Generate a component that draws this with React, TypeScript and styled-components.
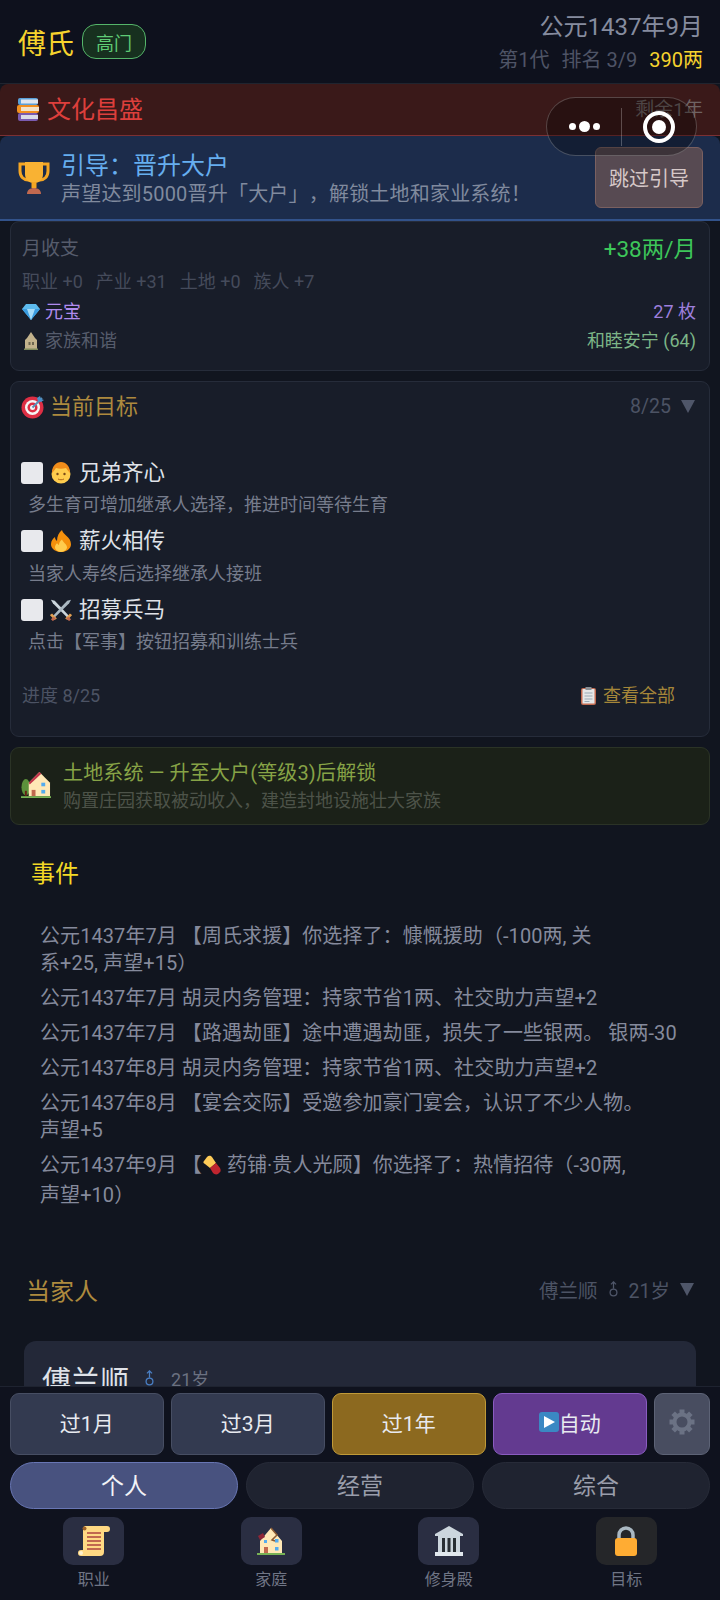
import React from 'react';
import styled, { createGlobalStyle } from 'styled-components';

const GlobalStyle = createGlobalStyle`
  html, body {
    margin: 0;
    padding: 0;
    background: #10141f;
  }
  * {
    box-sizing: border-box;
    text-spacing-trim: space-all;
  }
`;

const Page = styled.div`
  position: relative;
  width: 720px;
  height: 1600px;
  display: flex;
  flex-direction: column;
  overflow: hidden;
  background: #11151f;
  font-family: Roboto, "Noto Sans CJK SC", sans-serif;
`;

const Scroll = styled.div`
  flex: 1;
  min-height: 0;
  overflow: hidden;
`;

/* top bar */
const Header = styled.div`
  height: 84px;
  padding: 0 17px 0 18px;
  display: flex;
  align-items: center;
  justify-content: space-between;
  background: #0e111d;
  border-bottom: 1px solid #20242f;
`;

const FamilyBlock = styled.div`
  display: flex;
  align-items: center;
  gap: 8px;
`;

const FamilyName = styled.div`
  font-size: 28px;
  color: #f6d32d;
`;

const RankBadge = styled.div`
  width: 64px;
  height: 35px;
  border: 1px solid #55b56a;
  border-radius: 14px;
  display: flex;
  align-items: center;
  justify-content: center;
  background: #17301f;
  color: #5fcb75;
  font-size: 18px;
`;

const HeaderRight = styled.div`
  display: flex;
  flex-direction: column;
  align-items: flex-end;
  gap: 2px;
`;

const DateText = styled.div`
  font-size: 24px;
  line-height: 34px;
  color: #868c9f;
`;

const SubLine = styled.div`
  display: flex;
  gap: 12px;
  font-size: 20px;
  line-height: 28px;
  color: #4e5466;
`;

const Money = styled.span`
  color: #f6d32d;
`;

const CultureBanner = styled.div`
  height: 52px;
  padding: 0 17px 4px 17px;
  display: flex;
  align-items: center;
  justify-content: space-between;
  background: #3a1919;
  border-bottom: 1px solid #7c3033;
  border-radius: 8px 8px 0 0;
`;

const CultureTitle = styled.div`
  display: flex;
  align-items: center;
  gap: 8px;
  font-size: 24px;
  color: #dd3f3c;
  svg {
    margin-top: 3px;
  }
`;

const CultureTime = styled.div`
  font-size: 19px;
  color: #6f6363;
`;

const GuideBanner = styled.div`
  height: 85px;
  padding: 0 17px;
  display: flex;
  align-items: center;
  gap: 10px;
  background: #1c2c4b;
  border-bottom: 2px solid #32528a;
  border-radius: 8px 8px 0 0;
`;

const GuideText = styled.div`
  flex: 1;
  align-self: flex-start;
  padding-top: 14px;
`;

const GuideTitle = styled.div`
  font-size: 24px;
  line-height: 32px;
  color: #66aeef;
`;

const GuideDesc = styled.div`
  font-size: 20px;
  line-height: 24px;
  letter-spacing: 0.2px;
  color: #808a9e;
`;

const SkipButton = styled.div`
  width: 108px;
  height: 61px;
  display: flex;
  align-items: center;
  justify-content: center;
  background: #574a52;
  border: 1px solid #7a6060;
  border-radius: 6px;
  color: #d6c8c8;
  font-size: 20px;
`;

const Capsule = styled.div`
  position: absolute;
  top: 97px;
  left: 546px;
  width: 151px;
  height: 59px;
  display: flex;
  align-items: center;
  border: 1px solid rgba(255, 255, 255, 0.22);
  border-radius: 30px;
  background: rgba(0, 0, 0, 0.3);
`;

const CapsulePart = styled.div`
  flex: 1;
  height: 38px;
  display: flex;
  align-items: center;
  justify-content: center;
  gap: 3px;
  & + & {
    border-left: 1px solid rgba(255, 255, 255, 0.25);
  }
`;

const Dot = styled.span<{ $big?: boolean }>`
  width: ${p => (p.$big ? 11 : 7)}px;
  height: ${p => (p.$big ? 11 : 7)}px;
  border-radius: 50%;
  background: #fff;
`;

const RecordRing = styled.div`
  width: 32px;
  height: 32px;
  border: 4px solid #fff;
  border-radius: 50%;
  display: flex;
  align-items: center;
  justify-content: center;
  &::after {
    content: '';
    width: 14px;
    height: 14px;
    border-radius: 50%;
    background: #fff;
  }
`;

/* cards */
const Card = styled.div<{ $height: number }>`
  height: ${p => p.$height}px;
  margin: 0 10px 10px;
  background: #181d29;
  border: 1px solid #262c3a;
  border-radius: 9px;
`;

const IncomeBody = styled.div`
  padding: 9px 13px 0 11px;
`;

const SpreadRow = styled.div<{ $height: number }>`
  height: ${p => p.$height}px;
  display: flex;
  align-items: center;
  justify-content: space-between;
`;

const MutedLabel = styled.div`
  margin-bottom: 2px;
  font-size: 19px;
  color: #565c6c;
`;

const IncomeValue = styled.div`
  font-size: 22.500px;
  color: #3dc65a;
`;

const SourceRow = styled.div`
  display: flex;
  gap: 13px;
  font-size: 18px;
  color: #454b5b;
`;

const ResourceName = styled.div<{ $color: string }>`
  display: flex;
  align-items: center;
  gap: 5px;
  font-size: 18px;
  color: ${p => p.$color};
  svg {
    margin-top: 4px;
  }
`;

const ResourceValue = styled.div<{ $color: string }>`
  font-size: 18px;
  color: ${p => p.$color};
`;

const GoalHeader = styled.div`
  height: 44px;
  padding: 0 14px 0 10px;
  display: flex;
  align-items: center;
  justify-content: space-between;
`;

const GoalHeading = styled.div`
  display: flex;
  align-items: center;
  gap: 5px;
  font-size: 22px;
  color: #ad8a3e;
  svg {
    margin-top: 6px;
  }
`;

const Fold = styled.div`
  display: flex;
  align-items: center;
  gap: 10px;
  font-size: 19.5px;
  color: #4c5364;
`;

const GoalFold = styled(Fold)`
  margin-top: 5px;
`;

const GoalList = styled.div`
  padding: 27px 10px 0;
`;

const GoalItem = styled.div`
  height: 68.5px;
`;

const GoalTitle = styled.div`
  display: flex;
  align-items: center;
  gap: 7px;
  height: 34px;
  font-size: 21.5px;
  color: #dfe2e8;
  & > * {
    margin-top: 5px;
  }
`;

const CheckBox = styled.span`
  width: 22px;
  height: 22px;
  border-radius: 3px;
  background: #e8e9ed;
`;

const GoalDesc = styled.div`
  margin-top: 3px;
  padding-left: 7px;
  line-height: 30px;
  font-size: 18px;
  color: #767c8c;
`;

const GoalFooter = styled.div`
  margin-top: 22px;
  padding: 0 34px 0 11px;
  display: flex;
  align-items: center;
  justify-content: space-between;
  font-size: 18px;
  color: #4c5364;
`;

const ViewAll = styled.div`
  display: flex;
  align-items: center;
  gap: 6px;
  color: #a58639;
  svg {
    margin-top: 5px;
  }
`;

const LandCard = styled(Card)`
  padding: 0 10px;
  display: flex;
  align-items: center;
  gap: 12px;
  background: #1b2118;
  border-color: #2b3326;
  svg {
    margin-bottom: 3px;
  }
`;

const LandTitle = styled.div`
  font-size: 20px;
  line-height: 28px;
  letter-spacing: 0.15px;
  color: #87a346;
`;

const LandDesc = styled.div`
  font-size: 18px;
  line-height: 27px;
  color: #4d5349;
`;

/* events */
const EventsTitle = styled.div`
  padding: 22px 0 0 31px;
  font-size: 24px;
  line-height: 34px;
  color: #f3d925;
`;

const EventList = styled.div`
  padding: 32px 30px 0 40px;
  display: flex;
  flex-direction: column;
  gap: 8px;
`;

const EventLine = styled.div`
  font-size: 20px;
  line-height: 27px;
  letter-spacing: 0.07px;
  color: #858a9c;
`;

const InlineIcon = styled.span`
  display: inline-block;
  vertical-align: -3px;
  margin-right: 5px;
`;

const ChiefHeader = styled.div`
  margin-top: 63px;
  padding: 0 26px 0 26px;
  display: flex;
  align-items: center;
  justify-content: space-between;
`;

const ChiefTitle = styled.div`
  font-size: 24px;
  color: #ad8a3e;
`;

const ChiefCard = styled.div`
  margin: 34px 24px 0;
  height: 120px;
  padding: 21px 18px;
  display: flex;
  align-items: flex-start;
  gap: 12px;
  background: #232838;
  border-radius: 12px;
`;

const ChiefName = styled.div`
  font-size: 29px;
  line-height: 40px;
  color: #dfe2e8;
`;

const ChiefAge = styled.div`
  display: flex;
  align-items: center;
  gap: 16px;
  margin-top: 3px;
  margin-left: 3px;
  font-size: 18px;
  color: #6b7181;
`;

/* bottom bar */
const Footer = styled.div`
  position: relative;
  height: 214px;
  padding: 6px 10px 0;
  background: #0f121e;
  border-top: 1px solid #1e2330;
`;

const ActionRow = styled.div`
  display: grid;
  grid-template-columns: 1fr 1fr 1fr 1fr 56px;
  gap: 7.5px;
  height: 62px;
`;

const ActionButton = styled.div<{ $bg: string; $line: string }>`
  display: flex;
  align-items: center;
  justify-content: center;
  padding-bottom: 4px;
  background: ${p => p.$bg};
  border: 1px solid ${p => p.$line};
  border-radius: 9px;
  color: #e8eaf0;
  font-size: 21px;
`;

const TabRow = styled.div`
  display: grid;
  grid-template-columns: 1fr 1fr 1fr;
  gap: 8px;
  height: 47px;
  margin-top: 7px;
`;

const Tab = styled.div<{ $active?: boolean }>`
  display: flex;
  align-items: center;
  justify-content: center;
  padding-bottom: 4px;
  border-radius: 24px;
  background: ${p => (p.$active ? '#48527f' : '#1f2330')};
  border: 1px solid ${p => (p.$active ? '#6876b4' : '#272b38')};
  color: ${p => (p.$active ? '#f2f3f7' : '#9a9eab')};
  font-size: 23px;
`;

const NavRow = styled.div`
  display: grid;
  grid-template-columns: repeat(4, 1fr);
  margin: 8px -5px 0;
`;

const NavItem = styled.div`
  display: flex;
  flex-direction: column;
  align-items: center;
`;

const NavTile = styled.div<{ $locked?: boolean }>`
  width: 61px;
  height: 48px;
  display: flex;
  align-items: center;
  justify-content: center;
  border-radius: 10px;
  background: ${p => (p.$locked ? '#252629' : '#2a2e42')};
`;

const NavLabel = styled.div`
  margin-top: 3px;
  font-size: 16px;
  line-height: 24px;
  color: #6f7585;
`;

/* emoji drawings */
const Books = () => (
  <svg width="22" height="23" viewBox="0 0 22 23">
    <rect x="1" y="0" width="20" height="7" rx="2" fill="#5aa0d8" />
    <rect x="4" y="1.500" width="17" height="4" fill="#dfe6ee" />
    <rect x="0" y="7" width="22" height="8" rx="2" fill="#f19020" />
    <rect x="4" y="9" width="18" height="4" fill="#f3e3c8" />
    <rect x="1" y="15" width="20" height="8" rx="2" fill="#7a5bb0" />
    <rect x="4" y="17" width="17" height="4" fill="#d9dbe8" />
  </svg>
);

const Trophy = () => (
  <svg width="34" height="34" viewBox="0 0 34 34">
    <path d="M3 3h28v7c0 6-4 9-8 9H11C7 19 3 16 3 10z" fill="none" stroke="#f5a623" strokeWidth="3" />
    <path d="M8 1h18v12c0 6-4 9-9 9s-9-3-9-9z" fill="#f9b233" />
    <rect x="14.500" y="21" width="5" height="6" fill="#f5a623" />
    <path d="M10 33c0-4 3-6 7-6s7 2 7 6z" fill="#c1694f" />
  </svg>
);

const Diamond = () => (
  <svg width="18" height="16" viewBox="0 0 18 16">
    <path d="M4 0h10l4 5-9 11L0 5z" fill="#5dbbee" />
    <path d="M0 5h18L9 16z" fill="#3a9ce0" />
    <path d="M5 5h8l-4 11z" fill="#a6dcf8" />
  </svg>
);

const Shack = () => (
  <svg width="18" height="18" viewBox="0 0 18 18">
    <path d="M9 0l4 6 2 2v10H3V8l2-2z" fill="#c2b28c" />
    <rect x="6.500" y="10" width="2" height="3" fill="#6d6650" />
    <rect x="10" y="10" width="2" height="3" fill="#6d6650" />
    <rect x="2" y="16.500" width="14" height="1.500" fill="#7f8a5c" />
  </svg>
);

const Target = () => (
  <svg width="24" height="24" viewBox="0 0 24 24">
    <circle cx="11.500" cy="12.500" r="11" fill="#dd2e44" />
    <circle cx="11.500" cy="12.500" r="7.500" fill="#f5f5f5" />
    <circle cx="11.500" cy="12.500" r="5" fill="#dd2e44" />
    <circle cx="11.500" cy="12.500" r="2.500" fill="#f5f5f5" />
    <path d="M11.500 12.500L21 3" stroke="#5a8fb8" strokeWidth="2" />
    <path d="M19 1l1 3 3 1-3 2-3-1-1-3z" fill="#4a90c8" />
  </svg>
);

const Boy = () => (
  <svg width="22" height="22" viewBox="0 0 22 22">
    <circle cx="11" cy="12" r="9.500" fill="#ffcc4d" />
    <path d="M2 11C2 4 6 0 11 0s9 4 9 11c-2-2-3-4-4-5-3 1-7 1-10 0-1 1-2 3-4 5z" fill="#f08c1a" />
    <circle cx="7.500" cy="12" r="1.200" fill="#7a4a18" />
    <circle cx="14.500" cy="12" r="1.200" fill="#7a4a18" />
    <path d="M8 17c2 1 4 1 6 0" stroke="#b0661a" fill="none" />
  </svg>
);

const Fire = () => (
  <svg width="22" height="22" viewBox="0 0 22 28" preserveAspectRatio="none">
    <path d="M12 0c1 6 9 9 9 18 0 6-5 10-10 10S1 24 1 18c0-4 2-7 4-9 0 3 1 4 2 5 0-6 2-11 5-14z" fill="#f4900c" />
    <path d="M12 12c1 4 5 6 5 10 0 3-3 6-6 6s-6-3-6-6c0-2 1-4 2-5 1 1 1 2 2 2 0-3 1-5 3-7z" fill="#ffcc4d" />
  </svg>
);

const Swords = () => (
  <svg width="22" height="22" viewBox="0 0 23 26" preserveAspectRatio="none">
    <path d="M1 1l4 1 15 18-2 2L3 5z" fill="#ccd6dd" />
    <path d="M22 1l-4 1L3 20l2 2L20 5z" fill="#aab8c2" />
    <path d="M1 18l5 6M22 18l-5 6" stroke="#e3a052" strokeWidth="3" />
    <path d="M2 25l3-3M21 25l-3-3" stroke="#c1694f" strokeWidth="3" />
  </svg>
);

const Clipboard = () => (
  <svg width="17" height="18" viewBox="0 0 17 18">
    <rect x="1" y="1" width="15" height="17" rx="2" fill="#c1694f" />
    <rect x="2.500" y="2" width="12" height="14.500" fill="#e6e7e8" />
    <rect x="5.500" y="0" width="6" height="3" fill="#8a8f94" />
    <path d="M4.500 6h8M4.500 9h8M4.500 12h8M4.500 14.500h5" stroke="#99aab5" />
  </svg>
);

const Villa = () => (
  <svg width="30" height="27" viewBox="0 0 31 30" preserveAspectRatio="none">
    <ellipse cx="5" cy="18" rx="4.500" ry="9" fill="#5c913b" />
    <rect x="4" y="22" width="2" height="6" fill="#662113" />
    <path d="M8 13l11-12 11 12v15H8z" fill="#ffe8b6" />
    <path d="M8 13l11-12 2 2L9 15z" fill="#c0344a" />
    <rect x="11" y="21" width="4" height="7" fill="#c1694f" />
    <rect x="21" y="13" width="4" height="4" fill="#55acee" />
    <rect x="21" y="21" width="4" height="4" fill="#55acee" />
    <rect x="0" y="28" width="31" height="2" fill="#77b255" />
  </svg>
);

const Pill = () => (
  <svg width="20" height="20" viewBox="0 0 20 20">
    <path d="M2 6l3-4c2-2 4-1 5 0l4 6-6 5-5-4C1 8 1 7 2 6z" fill="#fdcb58" />
    <path d="M8 13l6-5 4 5c1 2 1 4-1 5l-1 1c-2 1-4 0-5-1z" fill="#c0252f" />
  </svg>
);

const Scroll3 = () => (
  <svg width="32" height="32" viewBox="0 0 32 32">
    <path d="M7 1h22a3 3 0 0 1 0 6h-3v20a4 4 0 0 1-4 4H3a3 3 0 0 1 0-6h2V4a3 3 0 0 1 2-3z" fill="#ffd983" />
    <circle cx="6.500" cy="3.500" r="2" fill="#a0642a" />
    <circle cx="3" cy="28" r="2" fill="#fff2d0" />
    <path d="M9 8h14M9 12h14M9 16h14M9 20h14M9 24h14" stroke="#c1694f" strokeWidth="2" />
  </svg>
);

const House3 = () => (
  <svg width="28" height="30" viewBox="0 0 28 30">
    <path d="M3 15L14 2l11 13v13H3z" fill="#ffe8b6" />
    <path d="M1 10l5-3 2 4-5 3z" fill="#8f2636" />
    <path d="M14 2l6 7-5 5 3 1" stroke="#8a5a34" strokeWidth="1.500" fill="none" />
    <rect x="7" y="21" width="4" height="7" fill="#c1694f" />
    <rect x="7" y="14" width="3" height="3" fill="#55acee" />
    <rect x="18" y="13" width="3.500" height="3.500" fill="#55acee" />
    <rect x="18" y="21" width="3.500" height="3.500" fill="#55acee" />
    <rect x="0" y="27" width="28" height="2" fill="#77b255" />
  </svg>
);

const Temple = () => (
  <svg width="32" height="32" viewBox="0 0 32 32">
    <path d="M16 1L30 9v2H2V9z" fill="#ccd6dd" />
    <path d="M5 11h22v17H5z" fill="#ccd6dd" />
    <path d="M9 13h3v14H9zM14.500 13h3v14h-3zM20 13h3v14h-3z" fill="#292f33" />
    <rect x="2" y="27" width="28" height="4" fill="#e1e8ed" />
  </svg>
);

const Lock = () => (
  <svg width="24" height="30" viewBox="0 0 24 30">
    <path d="M5 13V9a7 7 0 0 1 14 0v4" fill="none" stroke="#aab8c2" strokeWidth="3.500" />
    <rect x="1" y="12" width="22" height="18" rx="3" fill="#ffac33" />
  </svg>
);

const PlayBox = () => (
  <svg width="20" height="20" viewBox="0 0 20 20">
    <rect width="20" height="20" rx="3" fill="#3b88c3" />
    <path d="M5 4l11 6-11 6z" fill="#fff" />
  </svg>
);

const gearTeeth = [0, 45, 90, 135, 180, 225, 270, 315];

const Gear = () => (
  <svg width="26" height="26" viewBox="0 0 26 26">
    {gearTeeth.map(angle => (
      <rect key={angle} x="10.500" y="0.500" width="5" height="6" fill="#6b7284" transform={`rotate(${angle} 13 13)`} />
    ))}
    <circle cx="13" cy="13" r="7.500" fill="none" stroke="#6b7284" strokeWidth="4" />
  </svg>
);

const DownArrow = () => (
  <svg width="14" height="13" viewBox="0 0 14 13">
    <path d="M0 0h14L7 13z" fill="#4f5669" />
  </svg>
);

const GenderMark = ({ color }: { color: string }) => (
  <svg width="11" height="17" viewBox="0 0 12 20">
    <path d="M6 1v8M3 4l3-3 3 3" stroke={color} strokeWidth="1.500" fill="none" />
    <circle cx="6" cy="13.500" r="4" stroke={color} strokeWidth="1.500" fill="none" />
  </svg>
);

const goals = [
  { icon: <Boy />, title: '兄弟齐心', desc: '多生育可增加继承人选择，推进时间等待生育' },
  { icon: <Fire />, title: '薪火相传', desc: '当家人寿终后选择继承人接班' },
  { icon: <Swords />, title: '招募兵马', desc: '点击【军事】按钮招募和训练士兵' },
];

const navItems = [
  { icon: <Scroll3 />, label: '职业' },
  { icon: <House3 />, label: '家庭' },
  { icon: <Temple />, label: '修身殿' },
  { icon: <Lock />, label: '目标', locked: true },
];

const App: React.FC = () => {
  return (
    <Page>
      <GlobalStyle />
      <Scroll>
        <Header>
          <FamilyBlock>
            <FamilyName>傅氏</FamilyName>
            <RankBadge>高门</RankBadge>
          </FamilyBlock>
          <HeaderRight>
            <DateText>公元1437年9月</DateText>
            <SubLine>
              <span>第1代</span>
              <span>排名 3/9</span>
              <Money>390两</Money>
            </SubLine>
          </HeaderRight>
        </Header>

        <CultureBanner>
          <CultureTitle>
            <Books />
            文化昌盛
          </CultureTitle>
          <CultureTime>剩余1年</CultureTime>
        </CultureBanner>

        <GuideBanner>
          <Trophy />
          <GuideText>
            <GuideTitle>引导：晋升大户</GuideTitle>
            <GuideDesc>声望达到5000晋升「大户」，解锁土地和家业系统！</GuideDesc>
          </GuideText>
          <SkipButton>跳过引导</SkipButton>
        </GuideBanner>

        <Card $height={150}>
          <IncomeBody>
            <SpreadRow $height={32}>
              <MutedLabel>月收支</MutedLabel>
              <IncomeValue>+38两/月</IncomeValue>
            </SpreadRow>
            <SpreadRow $height={33}>
              <SourceRow>
                <span>职业 +0</span>
                <span>产业 +31</span>
                <span>土地 +0</span>
                <span>族人 +7</span>
              </SourceRow>
            </SpreadRow>
            <SpreadRow $height={28}>
              <ResourceName $color="#b08bee">
                <Diamond />
                元宝
              </ResourceName>
              <ResourceValue $color="#9d7fdc">27 枚</ResourceValue>
            </SpreadRow>
            <SpreadRow $height={30}>
              <ResourceName $color="#565c6c">
                <Shack />
                家族和谐
              </ResourceName>
              <ResourceValue $color="#7cb587">和睦安宁 (64)</ResourceValue>
            </SpreadRow>
          </IncomeBody>
        </Card>

        <Card $height={356}>
          <GoalHeader>
            <GoalHeading>
              <Target />
              当前目标
            </GoalHeading>
            <GoalFold>
              8/25
              <DownArrow />
            </GoalFold>
          </GoalHeader>
          <GoalList>
            {goals.map(goal => (
              <GoalItem key={goal.title}>
                <GoalTitle>
                  <CheckBox />
                  {goal.icon}
                  {goal.title}
                </GoalTitle>
                <GoalDesc>{goal.desc}</GoalDesc>
              </GoalItem>
            ))}
          </GoalList>
          <GoalFooter>
            <span>进度 8/25</span>
            <ViewAll>
              <Clipboard />
              查看全部
            </ViewAll>
          </GoalFooter>
        </Card>

        <LandCard $height={78}>
          <Villa />
          <div>
            <LandTitle>土地系统 — 升至大户(等级3)后解锁</LandTitle>
            <LandDesc>购置庄园获取被动收入，建造封地设施壮大家族</LandDesc>
          </div>
        </LandCard>

        <EventsTitle>事件</EventsTitle>
        <EventList>
          <EventLine>
            公元1437年7月 【周氏求援】你选择了：慷慨援助（-100两, 关<br />系+25, 声望+15）
          </EventLine>
          <EventLine>公元1437年7月 胡灵内务管理：持家节省1两、社交助力声望+2</EventLine>
          <EventLine>公元1437年7月 【路遇劫匪】途中遭遇劫匪，损失了一些银两。 银两-30</EventLine>
          <EventLine>公元1437年8月 胡灵内务管理：持家节省1两、社交助力声望+2</EventLine>
          <EventLine>
            公元1437年8月 【宴会交际】受邀参加豪门宴会，认识了不少人物。<br />声望+5
          </EventLine>
          <EventLine>
            公元1437年9月 【
            <InlineIcon>
              <Pill />
            </InlineIcon>
            药铺·贵人光顾】你选择了：热情招待（-30两,<br />声望+10）
          </EventLine>
        </EventList>

        <ChiefHeader>
          <ChiefTitle>当家人</ChiefTitle>
          <Fold>
            傅兰顺
            <GenderMark color="#4f5669" />
            21岁
            <DownArrow />
          </Fold>
        </ChiefHeader>
        <ChiefCard>
          <ChiefName>傅兰顺</ChiefName>
          <ChiefAge>
            <GenderMark color="#4a7fc4" />
            21岁
          </ChiefAge>
        </ChiefCard>
      </Scroll>

      <Capsule>
        <CapsulePart>
          <Dot />
          <Dot $big />
          <Dot />
        </CapsulePart>
        <CapsulePart>
          <RecordRing />
        </CapsulePart>
      </Capsule>

      <Footer>
        <ActionRow>
          <ActionButton $bg="#333a50" $line="#474e63">过1月</ActionButton>
          <ActionButton $bg="#333a50" $line="#474e63">过3月</ActionButton>
          <ActionButton $bg="#8c691f" $line="#c09a38">过1年</ActionButton>
          <ActionButton $bg="#633a90" $line="#8a5cc0">
            <PlayBox />
            自动
          </ActionButton>
          <ActionButton $bg="#484d60" $line="#5d6376">
            <Gear />
          </ActionButton>
        </ActionRow>
        <TabRow>
          <Tab $active>个人</Tab>
          <Tab>经营</Tab>
          <Tab>综合</Tab>
        </TabRow>
        <NavRow>
          {navItems.map(item => (
            <NavItem key={item.label}>
              <NavTile $locked={item.locked}>{item.icon}</NavTile>
              <NavLabel>{item.label}</NavLabel>
            </NavItem>
          ))}
        </NavRow>
      </Footer>
    </Page>
  );
};

export default App;
